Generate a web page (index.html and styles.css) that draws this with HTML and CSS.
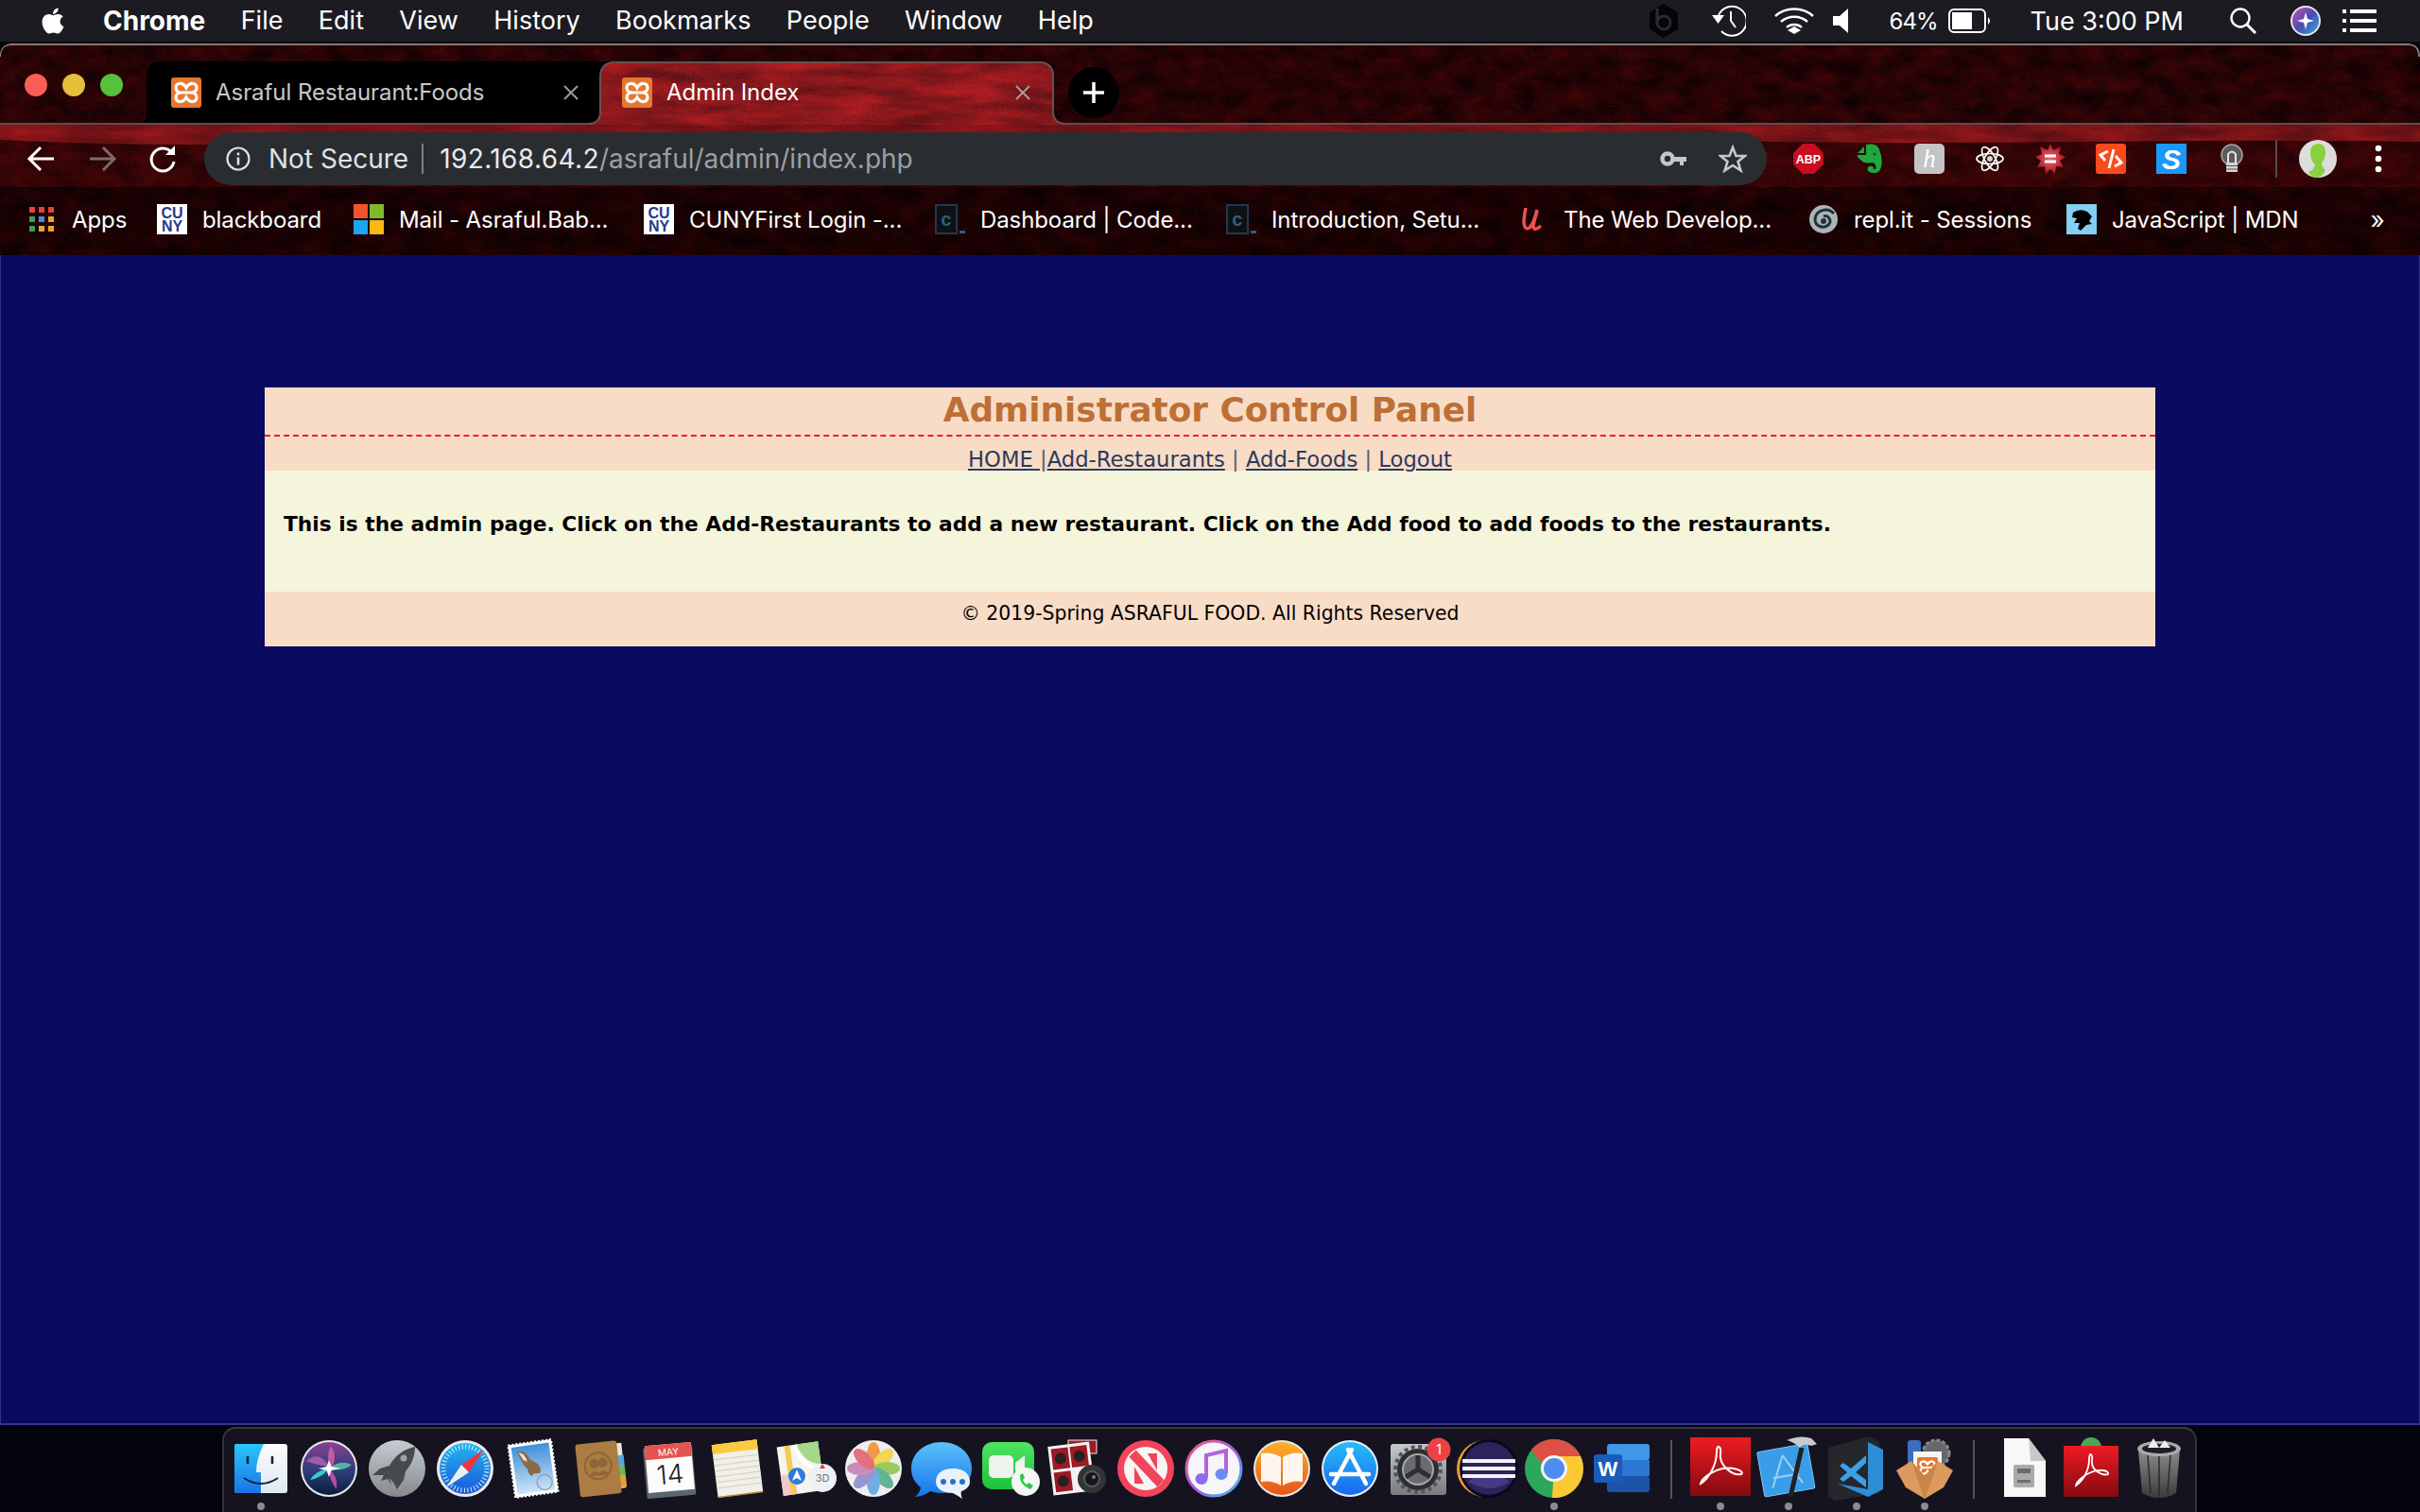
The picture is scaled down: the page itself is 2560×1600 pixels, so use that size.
FILE: index.html
```html
<!DOCTYPE html>
<html>
<head>
<meta charset="utf-8">
<title>Admin Index</title>
<link rel="stylesheet" href="styles.css">
</head>
<body>

<!-- shared gradients and small icons -->
<svg class="defs" width="0" height="0">
	<defs>
		<linearGradient id="g-finder" x1="0" y1="0" x2="0" y2="1"><stop offset="0" stop-color="#27c8fb"/><stop offset="1" stop-color="#1a74e8"/></linearGradient>
		<linearGradient id="g-finder2" x1="0" y1="0" x2="0" y2="1"><stop offset="0" stop-color="#fbfcfd"/><stop offset="1" stop-color="#dfe8f2"/></linearGradient>
		<linearGradient id="g-siri-top" x1="0" y1="0" x2="0" y2="1"><stop offset="0" stop-color="#8a3f93"/><stop offset=".55" stop-color="#2b3f78"/><stop offset="1" stop-color="#0c1c3a"/></linearGradient>
		<linearGradient id="g-rocket" x1="0" y1="0" x2="0" y2="1"><stop offset="0" stop-color="#c4cdd2"/><stop offset="1" stop-color="#85898c"/></linearGradient>
		<linearGradient id="g-safari" x1="0" y1="0" x2="0" y2="1"><stop offset="0" stop-color="#1fb6f0"/><stop offset="1" stop-color="#1a58d8"/></linearGradient>
		<linearGradient id="g-sky" x1="0" y1="0" x2="0" y2="1"><stop offset="0" stop-color="#3f8fdc"/><stop offset="1" stop-color="#cfe4f6"/></linearGradient>
		<linearGradient id="g-msg" x1="0" y1="0" x2="0" y2="1"><stop offset="0" stop-color="#5ac1fb"/><stop offset="1" stop-color="#1674ea"/></linearGradient>
		<linearGradient id="g-face" x1="0" y1="0" x2="0" y2="1"><stop offset="0" stop-color="#4fe35f"/><stop offset="1" stop-color="#1fc13c"/></linearGradient>
		<linearGradient id="g-books" x1="0" y1="0" x2="0" y2="1"><stop offset="0" stop-color="#fdb02c"/><stop offset="1" stop-color="#e4561a"/></linearGradient>
		<linearGradient id="g-store" x1="0" y1="0" x2="0" y2="1"><stop offset="0" stop-color="#25bdf8"/><stop offset="1" stop-color="#1a68ee"/></linearGradient>
		<linearGradient id="g-prefs" x1="0" y1="0" x2="0" y2="1"><stop offset="0" stop-color="#c5c9cc"/><stop offset="1" stop-color="#777b7e"/></linearGradient>
		<linearGradient id="g-red" x1="0" y1="0" x2="0" y2="1"><stop offset="0" stop-color="#ee1b24"/><stop offset="1" stop-color="#830a0f"/></linearGradient>
		<linearGradient id="g-ring" x1="0" y1="0" x2="1" y2="1"><stop offset="0" stop-color="#f45a7a"/><stop offset=".55" stop-color="#9b5de8"/><stop offset="1" stop-color="#35c6f0"/></linearGradient>
		<linearGradient id="g-trash" x1="0" y1="0" x2="0" y2="1"><stop offset="0" stop-color="#8a8c8e"/><stop offset="1" stop-color="#3a3b3d"/></linearGradient>
		<radialGradient id="g-wolf"><stop offset="0" stop-color="#f0686e"/><stop offset="1" stop-color="#a5161f"/></radialGradient>
		<linearGradient id="g-menu-siri" x1="0" y1="0" x2="1" y2="1"><stop offset="0" stop-color="#d653a8"/><stop offset=".5" stop-color="#4a4ab8"/><stop offset="1" stop-color="#2fb8d8"/></linearGradient>

		<filter id="tex-dark" x="0" y="0" width="100%" height="100%" color-interpolation-filters="sRGB">
			<feTurbulence type="fractalNoise" baseFrequency="0.035 0.06" numOctaves="3" seed="7" result="low"/>
			<feColorMatrix in="low" values="1 0 0 0 0  1 0 0 0 0  1 0 0 0 0  0 0 0 0 1" result="lowa"/>
			<feTurbulence type="fractalNoise" baseFrequency="0.7" numOctaves="2" seed="2" result="high"/>
			<feColorMatrix in="high" values="1 0 0 0 0  1 0 0 0 0  1 0 0 0 0  0 0 0 0 1" result="higha"/>
			<feComposite in="lowa" in2="higha" operator="arithmetic" k2=".5" k3=".5"/>
			<feColorMatrix values=".5 0 0 0 -.1  .04 0 0 0 -.008  .05 0 0 0 -.006  0 0 0 0 1"/>
		</filter>
		<filter id="tex-red" x="0" y="0" width="100%" height="100%" color-interpolation-filters="sRGB">
			<feTurbulence type="fractalNoise" baseFrequency="0.015 0.07" numOctaves="3" seed="3" result="low"/>
			<feColorMatrix in="low" values="1 0 0 0 0  1 0 0 0 0  1 0 0 0 0  0 0 0 0 1" result="lowa"/>
			<feTurbulence type="fractalNoise" baseFrequency="0.7" numOctaves="2" seed="9" result="high"/>
			<feColorMatrix in="high" values="1 0 0 0 0  1 0 0 0 0  1 0 0 0 0  0 0 0 0 1" result="higha"/>
			<feComposite in="lowa" in2="higha" operator="arithmetic" k2=".6" k3=".4"/>
			<feColorMatrix values=".8 0 0 0 .14  .1 0 0 0 .045  .1 0 0 0 .06  0 0 0 0 1"/>
		</filter>
		<clipPath id="band"><path d="M0 86H2560V104C2300 100 2100 108 1880 104C1600 98 1000 110 600 108C400 104 200 112 0 102Z"/></clipPath>
		<clipPath id="tab"><path d="M622 86q13 0 13-14V35q0-16 16-16H1099q16 0 16 16V72q0 14 13 14Z"/></clipPath>

		<symbol id="i-xampp" viewBox="0 0 32 32">
			<rect width="32" height="32" rx="3" fill="#e8772e"/>
			<path d="M16 11C12 4 5 6 5 11C5 14 8 16 11 16C8 16 5 18 5 21C5 26 12 28 16 21C20 28 27 26 27 21C27 18 24 16 21 16C24 16 27 14 27 11C27 6 20 4 16 11ZM11 16H21" fill="none" stroke="#fff" stroke-width="3.200"/>
		</symbol>
		<symbol id="i-cuny" viewBox="0 0 32 32">
			<rect width="32" height="32" fill="#fff"/>
			<text x="16" y="14.500" class="fav-text">CU</text>
			<text x="16" y="28.500" class="fav-text">NY</text>
		</symbol>
		<symbol id="i-code" viewBox="0 0 32 32">
			<rect x="1" y="1" width="22" height="30" fill="#0d1014" stroke="#1f3a4d" stroke-width="2"/>
			<text x="12" y="23" class="fav-c">c</text>
			<rect x="26" y="28" width="6" height="3" fill="#2f5f7d"/>
		</symbol>
	</defs>
</svg>

<!-- mac menu bar -->
<div class="menubar">
	<svg class="apple" viewBox="0 0 24 24"><path fill="#fff" d="M17.05 20.28c-.98.95-2.05.8-3.08.35-1.09-.46-2.09-.48-3.24 0-1.44.62-2.2.44-3.06-.35C2.79 15.25 3.51 7.59 9.05 7.31c1.35.07 2.29.74 3.08.8 1.18-.24 2.31-.93 3.57-.84 1.51.12 2.65.72 3.4 1.8-3.12 1.87-2.38 5.98.48 7.13-.57 1.5-1.31 2.99-2.54 4.09zM12.03 7.25c-.15-2.23 1.66-4.07 3.74-4.25.29 2.58-2.34 4.5-3.74 4.25z"/></svg>
	<ul class="menu">
		<li class="app-name">Chrome</li>
		<li>File</li>
		<li>Edit</li>
		<li>View</li>
		<li>History</li>
		<li>Bookmarks</li>
		<li>People</li>
		<li>Window</li>
		<li>Help</li>
	</ul>
	<div class="status">
		<svg class="st-hex" width="34" height="38" viewBox="0 0 34 38"><path d="M17 1L32 10V28L17 37L2 28V10Z" fill="#050507"/><circle cx="17" cy="21" r="7" fill="none" stroke="#2a2a30" stroke-width="3"/><path d="M10 6V21" stroke="#2a2a30" stroke-width="3"/></svg>
		<svg class="st-clock" width="38" height="36" viewBox="0 0 38 36"><path d="M9 12A15.500 15.500 0 1 1 12 29" fill="none" stroke="#fff" stroke-width="2"/><path d="M2 12H15L8.500 21Z" fill="#fff"/><path d="M22 8V18L27 25" fill="none" stroke="#fff" stroke-width="2"/></svg>
		<svg class="st-wifi" width="42" height="30" viewBox="0 0 42 30"><g fill="none" stroke="#fff" stroke-width="2.400"><path d="M1 10C12 0 30 0 41 10"/><path d="M7 16C15 9 27 9 35 16"/><path d="M13 22C17 18 25 18 29 22"/></g><path d="M14 26L21 22L28 26L21 30Z" fill="#fff" transform="translate(0 -1)"/></svg>
		<svg class="st-vol" width="18" height="26" viewBox="0 0 18 26"><path d="M0 8H7L16 0V26L7 18H0Z" fill="#fff"/></svg>
		<span class="st-pct">64%</span>
		<svg class="st-bat" width="46" height="26" viewBox="0 0 46 26"><rect x="1" y="1" width="38" height="24" rx="5" fill="none" stroke="#fff" stroke-width="2"/><rect x="4" y="4" width="21" height="18" fill="#fff"/><path d="M42 9Q46 13 42 17Z" fill="#fff"/></svg>
		<span class="st-time">Tue 3:00 PM</span>
		<svg class="st-search" width="30" height="30" viewBox="0 0 30 30"><circle cx="12" cy="12" r="9.500" fill="none" stroke="#fff" stroke-width="2.400"/><path d="M19 19L28 28" stroke="#fff" stroke-width="3"/></svg>
		<svg class="st-siri" width="32" height="32" viewBox="0 0 32 32"><circle cx="16" cy="16" r="15" fill="url(#g-menu-siri)" stroke="#e4e4e8" stroke-width="2"/><path d="M16 7L18 14L25 16L18 18L16 25L14 18L7 16L14 14Z" fill="#fff"/></svg>
		<svg class="st-list" width="36" height="24" viewBox="0 0 36 24"><g fill="#fff"><rect width="4" height="4"/><rect y="10" width="4" height="4"/><rect y="20" width="4" height="4"/><rect x="8" width="28" height="4"/><rect x="8" y="10" width="28" height="4"/><rect x="8" y="20" width="28" height="4"/></g></svg>
	</div>
</div>

<div class="window">
	<div class="chrome">
		<!-- themed frame, lies behind the tabs and toolbar -->
		<svg class="frame" width="2560" height="224" viewBox="0 0 2560 224">
			<rect width="2560" height="224" filter="url(#tex-dark)"/>
			<rect y="86" width="2560" height="66" fill="#b01018" opacity=".1"/>
			<rect y="152" width="2560" height="72" fill="#000" opacity=".3"/>
			<g clip-path="url(#band)" opacity=".78"><rect y="86" width="2560" height="40" filter="url(#tex-red)"/></g>
			<rect y="84" width="2560" height="2" fill="#5e4d4f"/>
			<path d="M148 84q7 0 7-10V35q0-16 16-16H650V84Z" fill="#000"/>
			<g clip-path="url(#tab)"><rect x="620" y="18" width="510" height="70" filter="url(#tex-red)"/></g>
			<path d="M622 85q13 0 13-13V35q0-15 16-15H1099q15 0 15 15V72q0 13 14 13" fill="none" stroke="#645153" stroke-width="2"/>
			<path d="M0 14Q0 1 12 1H2548Q2559 1 2559 14" fill="none" stroke="#85797a" stroke-width="2"/>
		</svg>

		<div class="tabstrip">
			<div class="lights">
				<span class="light light-red"></span>
				<span class="light light-yellow"></span>
				<span class="light light-green"></span>
			</div>
			<div class="tab">
				<svg class="favicon"><use href="#i-xampp"/></svg>
				<span class="tab-title">Asraful Restaurant:Foods</span>
				<svg class="tab-close" width="16" height="16" viewBox="0 0 16 16"><path d="M1 1L15 15M15 1L1 15" stroke="#9a9a9a" stroke-width="2"/></svg>
			</div>
			<div class="tab active">
				<svg class="favicon"><use href="#i-xampp"/></svg>
				<span class="tab-title">Admin Index</span>
				<svg class="tab-close" width="16" height="16" viewBox="0 0 16 16"><path d="M1 1L15 15M15 1L1 15" stroke="#b39a9a" stroke-width="2"/></svg>
			</div>
			<div class="new-tab">
				<svg width="26" height="26" viewBox="0 0 26 26"><path d="M13 2V24M2 13H24" stroke="#fff" stroke-width="3.500"/></svg>
			</div>
		</div>

		<div class="toolbar">
			<svg class="nav-btn" viewBox="0 0 32 32"><path d="M29 16H4M15 4L3 16L15 28" fill="none" stroke="#fff" stroke-width="3"/></svg>
			<svg class="nav-btn" viewBox="0 0 32 32"><path d="M3 16H28M17 4L29 16L17 28" fill="none" stroke="#7d6a6b" stroke-width="3"/></svg>
			<svg class="nav-btn" viewBox="0 0 32 32"><path d="M26 10A12 12 0 1 0 28 19" fill="none" stroke="#fff" stroke-width="3"/><path d="M19 12L29 2V12Z" fill="#fff"/></svg>
			<div class="omnibox">
				<svg class="info" width="26" height="26" viewBox="0 0 26 26"><circle cx="13" cy="13" r="11.500" fill="none" stroke="#dfe1e5" stroke-width="2.200"/><rect x="11.700" y="11.500" width="2.600" height="8" fill="#dfe1e5"/><rect x="11.700" y="6.500" width="2.600" height="2.800" fill="#dfe1e5"/></svg>
				<span class="not-secure">Not Secure</span>
				<span class="omni-sep"></span>
				<span class="url"><b>192.168.64.2</b>/asraful/admin/index.php</span>
				<svg class="key" width="28" height="16" viewBox="0 0 28 16"><circle cx="8" cy="8" r="5.500" fill="none" stroke="#c5c8cb" stroke-width="4.500"/><path d="M13 6H28V11H25V15H21V11H13Z" fill="#c5c8cb"/></svg>
				<svg class="star" width="30" height="30" viewBox="0 0 30 30"><path d="M15 3L18.500 12H28L20.500 18L23.500 27.500L15 22L6.500 27.500L9.500 18L2 12H11.500Z" fill="none" stroke="#c5c8cb" stroke-width="2.600"/></svg>
			</div>
			<div class="exts">
				<svg class="ext" viewBox="0 0 32 32"><path d="M10 0H22L32 10V22L22 32H10L0 22V10Z" fill="#c70d1f"/><text x="16" y="21" class="abp">ABP</text></svg>
				<svg class="ext" viewBox="0 0 32 32"><path d="M4 10L11 3V10ZM13 1Q24-1 27 6Q31 16 29 25Q27 32 20 31Q13 30 15 25Q18 22 21 25Q20 28 23 27Q25 23 20 20Q11 22 7 17Q3 14 4 12H13Z" fill="#1fa83d"/><circle cx="22" cy="11" r="1.500" fill="#0a5a20"/></svg>
				<svg class="ext" viewBox="0 0 32 32"><rect width="32" height="32" rx="5" fill="#c4c4c4"/><text x="16" y="25" class="ext-h">h</text></svg>
				<svg class="ext" viewBox="0 0 32 32"><g fill="none" stroke="#fff" stroke-width="1.700"><ellipse cx="16" cy="16" rx="14" ry="5.500"/><ellipse cx="16" cy="16" rx="14" ry="5.500" transform="rotate(60 16 16)"/><ellipse cx="16" cy="16" rx="14" ry="5.500" transform="rotate(120 16 16)"/></g><circle cx="16" cy="16" r="3" fill="#d8cfcf"/></svg>
				<svg class="ext" viewBox="0 0 32 32"><path d="M16 0L19 7L27 3L25 11L32 14L26 18L30 25L22 24L21 32L16 27L11 32L10 24L2 25L6 18L0 14L7 11L5 3L13 7Z" fill="url(#g-wolf)"/><path d="M10 13H22M10 19H22" stroke="#fff" stroke-width="3"/></svg>
				<svg class="ext" viewBox="0 0 32 32"><rect width="32" height="32" rx="3" fill="#fb4a1c"/><path d="M13 8L5 12L10 18M19 6L14 26M21 13L27 20L20 24" fill="none" stroke="#fff" stroke-width="3"/></svg>
				<svg class="ext" viewBox="0 0 32 32"><rect width="32" height="32" fill="#1b97fb"/><text x="16" y="27" class="ext-s">S</text></svg>
				<svg class="ext" viewBox="0 0 32 32"><circle cx="16" cy="12" r="11" fill="#5b5b5d" stroke="#a4a4a4" stroke-width="1.500"/><path d="M12 20V11Q16 6 20 11V20" fill="none" stroke="#e4e4e4" stroke-width="2"/><rect x="10" y="20" width="12" height="10" rx="1" fill="#d5d5d5"/><path d="M10 23.500H22M10 27H22" stroke="#555" stroke-width="1"/></svg>
			</div>
			<span class="tool-sep"></span>
			<svg class="avatar" viewBox="0 0 40 40"><circle cx="20" cy="20" r="20" fill="#dcdcdc"/><path d="M12 14Q12 4 21 4Q29 5 28 15Q27 22 24 24Q24 29 28 32Q24 40 18 40Q12 38 10 34Q17 31 17 26Q12 22 12 14Z" fill="#8ad03d"/></svg>
			<svg class="dots" viewBox="0 0 32 32"><circle cx="16" cy="5" r="3.300" fill="#fff"/><circle cx="16" cy="16" r="3.300" fill="#fff"/><circle cx="16" cy="27" r="3.300" fill="#fff"/></svg>
		</div>

		<div class="bookmarks">
			<div class="bm bm-apps">
				<svg class="bm-grid" viewBox="0 0 26 26"><rect width="6" height="6" fill="#e8403a"/><rect x="10" width="6" height="6" fill="#e8403a"/><rect x="20" width="6" height="6" fill="#e8403a"/><rect y="10" width="6" height="6" fill="#3b9e5c"/><rect x="10" y="10" width="6" height="6" fill="#3e8ee8"/><rect x="20" y="10" width="6" height="6" fill="#f0a32c"/><rect y="20" width="6" height="6" fill="#3b9e5c"/><rect x="10" y="20" width="6" height="6" fill="#f0a32c"/><rect x="20" y="20" width="6" height="6" fill="#f0a32c"/></svg>
				<span>Apps</span>
			</div>
			<div class="bm bm-black"><svg class="favicon"><use href="#i-cuny"/></svg><span>blackboard</span></div>
			<div class="bm bm-mail">
				<svg class="favicon" viewBox="0 0 32 32"><rect width="15" height="15" fill="#f1542c"/><rect x="17" width="15" height="15" fill="#7fba2a"/><rect y="17" width="15" height="15" fill="#1ca5f0"/><rect x="17" y="17" width="15" height="15" fill="#fdb813"/></svg>
				<span>Mail - Asraful.Bab...</span>
			</div>
			<div class="bm bm-first"><svg class="favicon"><use href="#i-cuny"/></svg><span>CUNYFirst Login -...</span></div>
			<div class="bm bm-dash"><svg class="favicon"><use href="#i-code"/></svg><span>Dashboard | Code...</span></div>
			<div class="bm bm-intro"><svg class="favicon"><use href="#i-code"/></svg><span>Introduction, Setu...</span></div>
			<div class="bm bm-udemy">
				<svg class="favicon" viewBox="0 0 32 32"><path d="M8 4Q6 14 6 20Q7 28 12 25Q16 22 20 6M20 8Q16 20 16 24Q17 29 24 23" fill="none" stroke="#ec5252" stroke-width="3.500"/></svg>
				<span>The Web Develop...</span>
			</div>
			<div class="bm bm-repl">
				<svg class="favicon" viewBox="0 0 32 32"><circle cx="16" cy="16" r="15" fill="#aab4ba"/><path d="M27 10C20 3 8 6 7 16C7 24 17 27 22 21C25 16 20 11 16 13" fill="none" stroke="#24323a" stroke-width="3"/><circle cx="16" cy="18" r="3" fill="#24323a"/></svg>
				<span>repl.it - Sessions</span>
			</div>
			<div class="bm bm-mdn">
				<svg class="favicon" viewBox="0 0 32 32"><rect width="32" height="32" fill="#83d0f2"/><path d="M7 9Q14 4 22 8L27 13L24 18L27 21L21 22L15 28L12 26L14 20L8 20L11 15L6 14Z" fill="#000"/></svg>
				<span>JavaScript | MDN</span>
			</div>
			<span class="bm-more">»</span>
		</div>
	</div>

	<!-- the page inside the browser -->
	<div class="page">
		<div class="panel">
			<h1 class="panel-title">Administrator Control Panel</h1>
			<div class="panel-nav"><a href="#">HOME </a>|<a href="#">Add-Restaurants</a> | <a href="#">Add-Foods</a> | <a href="#">Logout</a></div>
			<div class="panel-body">
				<p>This is the admin page. Click on the Add-Restaurants to add a new restaurant. Click on the Add food to add foods to the restaurants.</p>
			</div>
			<div class="panel-foot">© 2019-Spring ASRAFUL FOOD. All Rights Reserved</div>
		</div>
	</div>
</div>

<div class="dock">
	<!-- finder -->
	<div class="dock-item on"><svg viewBox="0 0 72 72"><rect x="8" y="10" width="56" height="52" rx="3" fill="url(#g-finder2)"/><path d="M11 10H39Q31 26 31 40H36V62H11Q8 62 8 59V13Q8 10 11 10Z" fill="url(#g-finder)"/><path d="M22 23V31M48 23V31" stroke="#123" stroke-width="2.500"/><path d="M18 46Q36 58 54 46" fill="none" stroke="#123" stroke-width="2"/></svg><i></i></div>
	<!-- siri -->
	<div class="dock-item"><svg viewBox="0 0 72 72"><circle cx="36" cy="36" r="30" fill="#e8e8ea"/><circle cx="36" cy="36" r="28" fill="url(#g-siri-top)"/><path d="M12 28Q26 16 36 34Q22 32 12 28Z" fill="#b565b8" opacity=".8"/><path d="M38 12Q46 24 38 36Q32 24 38 12Z" fill="#e060b0" opacity=".8"/><path d="M36 36Q48 26 60 32Q50 40 36 36Z" fill="#58c8a8" opacity=".85"/><path d="M36 36Q46 44 44 58Q36 48 36 36Z" fill="#d050b0" opacity=".85"/><path d="M36 36Q28 46 16 48Q22 38 36 36Z" fill="#40d8d8" opacity=".9"/><path d="M36 27L38.500 34L48 36L38.500 38L36 45L33.500 38L25 36L33.500 34Z" fill="#fff"/></svg><i></i></div>
	<!-- launchpad -->
	<div class="dock-item"><svg viewBox="0 0 72 72"><circle cx="36" cy="36" r="30" fill="url(#g-rocket)"/><path d="M55 13C44 15 34 22 28 33L18 36L10 43L22 43L19 49L26 47L30 53L28 46L33 52L36 58L43 48L45 39C51 32 55 24 55 13Z" fill="#47494c"/><circle cx="43" cy="25" r="3.500" fill="#9ca1a4"/></svg><i></i></div>
	<!-- safari -->
	<div class="dock-item"><svg viewBox="0 0 72 72"><circle cx="36" cy="36" r="30" fill="#e9ecef"/><circle cx="36" cy="36" r="27" fill="url(#g-safari)"/><circle cx="36" cy="36" r="23" fill="none" stroke="#d9effb" stroke-width="5" stroke-dasharray="1 2.600"/><path d="M56 16L32 32L40 40Z" fill="#f0343c"/><path d="M16 56L40 40L32 32Z" fill="#eceff2"/></svg><i></i></div>
	<!-- mail -->
	<div class="dock-item"><svg viewBox="0 0 72 72"><g transform="rotate(-8 36 36)"><rect x="13" y="8" width="46" height="56" fill="#fff" stroke="#fff" stroke-width="2" stroke-dasharray="2 2"/><rect x="16" y="11" width="40" height="50" fill="url(#g-sky)"/><path d="M22 16Q30 14 34 26Q48 34 42 42Q34 40 34 44Q30 42 30 36Q24 28 22 16Z" fill="#8a6a48"/><path d="M23 17Q29 18 31 28L27 26Z" fill="#e8e2d6"/><circle cx="46" cy="52" r="8" fill="none" stroke="#8a9aa8" stroke-width="1.200"/></g></svg><i></i></div>
	<!-- contacts -->
	<div class="dock-item"><svg viewBox="0 0 72 72"><g transform="rotate(-6 36 36)"><rect x="52" y="11" width="8" height="48" fill="#e8e6e0"/><rect x="54" y="24" width="7" height="12" fill="#5ba8d8"/><rect x="54" y="36" width="7" height="10" fill="#6fb84e"/><rect x="54" y="46" width="7" height="12" fill="#e8a030"/><rect x="11" y="8" width="44" height="56" rx="3" fill="#ab7d44"/><circle cx="33" cy="33" r="14" fill="none" stroke="#8f6635" stroke-width="2"/><circle cx="29" cy="30" r="5" fill="#8f6635"/><circle cx="38" cy="30" r="5" fill="#8f6635"/><path d="M22 43Q29 34 35 43ZM31 43Q38 34 44 43Z" fill="#8f6635"/></g></svg><i></i></div>
	<!-- calendar -->
	<div class="dock-item"><svg viewBox="0 0 72 72"><g transform="rotate(-5 36 36)"><rect x="10" y="12" width="52" height="54" rx="2" fill="#5b6770"/><rect x="12" y="10" width="49" height="50" fill="#fcfcfc"/><rect x="12" y="10" width="49" height="15" fill="#e5524f"/><text x="36.500" y="22" class="cal-may">MAY</text><text x="36.500" y="52" class="cal-day">14</text></g></svg><i></i></div>
	<!-- notes -->
	<div class="dock-item"><svg viewBox="0 0 72 72"><g transform="rotate(-7 36 36)"><rect x="12" y="8" width="48" height="56" fill="#f1efe8"/><rect x="12" y="8" width="48" height="10" fill="#fbcb3f"/><path d="M12 24H60M12 30H60M12 36H60M12 42H60M12 48H60M12 54H60" stroke="#cfcdc6" stroke-width="1"/><rect x="12" y="63" width="48" height="1.500" fill="#a88a40"/></g></svg><i></i></div>
	<!-- maps -->
	<div class="dock-item"><svg viewBox="0 0 72 72"><g transform="rotate(-8 32 36)"><rect x="9" y="10" width="44" height="52" fill="#f6f4ec"/><path d="M30 10H53V34Q36 32 30 10Z" fill="#a6d88a"/><path d="M9 40H24V62H9Z" fill="#f2c8d0"/><path d="M20 10V62" stroke="#f4cc52" stroke-width="6"/><path d="M28 10Q32 36 53 40" fill="none" stroke="#fff" stroke-width="4"/></g><circle cx="27" cy="44" r="9" fill="#2c7be0"/><path d="M27 37L32 49L27 46L22 49Z" fill="#fff"/><circle cx="54" cy="46" r="15" fill="#eef1f4"/><path d="M54 31L51 36H57Z" fill="#e0403a"/><text x="54" y="50" class="maps-3d">3D</text></svg><i></i></div>
	<!-- photos -->
	<div class="dock-item"><svg viewBox="0 0 72 72"><circle cx="36" cy="36" r="30" fill="#eeeeee"/><g transform="translate(36 36)" opacity=".85"><ellipse cx="0" cy="-14" rx="7" ry="14" fill="#f58a2e"/><ellipse cx="0" cy="-14" rx="7" ry="14" fill="#f3d23a" transform="rotate(45)"/><ellipse cx="0" cy="-14" rx="7" ry="14" fill="#8ec448" transform="rotate(90)"/><ellipse cx="0" cy="-14" rx="7" ry="14" fill="#4aa98a" transform="rotate(135)"/><ellipse cx="0" cy="-14" rx="7" ry="14" fill="#5aa4de" transform="rotate(180)"/><ellipse cx="0" cy="-14" rx="7" ry="14" fill="#8b86c8" transform="rotate(225)"/><ellipse cx="0" cy="-14" rx="7" ry="14" fill="#c57cb4" transform="rotate(270)"/><ellipse cx="0" cy="-14" rx="7" ry="14" fill="#e5596a" transform="rotate(315)"/></g></svg><i></i></div>
	<!-- messages -->
	<div class="dock-item"><svg viewBox="0 0 72 72"><path d="M36 8C18 8 4 20 4 36C4 46 9 52 14 56Q13 62 8 66Q18 65 24 60Q30 62 36 62C54 62 68 52 68 36C68 20 54 8 36 8Z" fill="url(#g-msg)"/><path d="M48 36C36 36 30 42 30 50C30 58 38 62 48 62Q52 64 58 68Q56 64 57 60C63 58 66 54 66 50C66 42 60 36 48 36Z" fill="#e9f2fb"/><circle cx="38" cy="50" r="3" fill="#2a6fc4"/><circle cx="48" cy="50" r="3" fill="#2a6fc4"/><circle cx="58" cy="50" r="3" fill="#2a6fc4"/></svg><i></i></div>
	<!-- facetime -->
	<div class="dock-item"><svg viewBox="0 0 72 72"><rect x="7" y="8" width="55" height="50" rx="10" fill="url(#g-face)"/><rect x="14" y="22" width="26" height="24" rx="5" fill="#eef4ec"/><path d="M42 30L52 22V46L42 38Z" fill="#eef4ec"/><circle cx="53" cy="50" r="15" fill="#f4f7f4"/><path d="M47 43Q46 53 58 58L61 54L56 51L54 53Q51 51 50 48L52 46L50 41Z" fill="#2cc84a"/></svg><i></i></div>
	<!-- photo booth -->
	<div class="dock-item"><svg viewBox="0 0 72 72"><rect x="26" y="6" width="30" height="14" fill="#9c1a24" stroke="#eee"/><g transform="rotate(-7 30 34)"><rect x="7" y="10" width="44" height="52" fill="#f2f2f2"/><rect x="10" y="13" width="18" height="22" fill="#9c1a24"/><rect x="30" y="13" width="18" height="22" fill="#9c1a24"/><rect x="10" y="38" width="18" height="21" fill="#9c1a24"/><circle cx="19" cy="24" r="6" fill="#2b2020"/><circle cx="39" cy="24" r="6" fill="#2b2020"/><circle cx="19" cy="48" r="6" fill="#2b2020"/></g><circle cx="51" cy="47" r="15" fill="#333436"/><circle cx="51" cy="47" r="8" fill="#14141a" stroke="#585a5e" stroke-width="2"/><circle cx="53" cy="45" r="2" fill="#6a72a8"/></svg><i></i></div>
	<!-- news -->
	<div class="dock-item"><svg viewBox="0 0 72 72"><circle cx="36" cy="36" r="30" fill="#f2445a"/><circle cx="36" cy="36" r="23" fill="#f7f5f5"/><path d="M22 20L52 52" stroke="#f2445a" stroke-width="10"/><path d="M24 34V52L34 52ZM48 38V20L38 20Z" fill="#f2445a"/></svg><i></i></div>
	<!-- music -->
	<div class="dock-item"><svg viewBox="0 0 72 72"><circle cx="36" cy="36" r="29" fill="#f7f5f8" stroke="url(#g-ring)" stroke-width="3"/><path d="M28 46V22L49 17V41" fill="none" stroke="#b064e0" stroke-width="4"/><ellipse cx="23" cy="47" rx="6.500" ry="6" fill="#8a6cf0"/><ellipse cx="44" cy="42" rx="6.500" ry="6" fill="#6a8cf0"/></svg><i></i></div>
	<!-- books -->
	<div class="dock-item"><svg viewBox="0 0 72 72"><circle cx="36" cy="36" r="30" fill="#e8e8e8"/><circle cx="36" cy="36" r="28" fill="url(#g-books)"/><path d="M35 24Q26 18 14 20V50Q26 48 35 54ZM37 24Q46 18 58 20V50Q46 48 37 54Z" fill="#fdf6ee"/></svg><i></i></div>
	<!-- app store -->
	<div class="dock-item"><svg viewBox="0 0 72 72"><circle cx="36" cy="36" r="30" fill="#e8eef4"/><circle cx="36" cy="36" r="28" fill="url(#g-store)"/><path d="M38 16L19 52M34 16L53 52M16 42H56" fill="none" stroke="#fff" stroke-width="4.500" stroke-linecap="round"/></svg><i></i></div>
	<!-- system preferences -->
	<div class="dock-item"><svg viewBox="0 0 72 72"><rect x="7" y="10" width="59" height="54" rx="3" fill="url(#g-prefs)"/><circle cx="36" cy="37" r="22" fill="#2e2f31"/><circle cx="36" cy="37" r="24" fill="none" stroke="#55565a" stroke-width="4" stroke-dasharray="4 3.500"/><circle cx="36" cy="37" r="16" fill="#6a6b6e" stroke="#a5a7aa" stroke-width="2"/><path d="M36 37V22M36 37L49 45M36 37L23 45" stroke="#2e2f31" stroke-width="5"/><circle cx="58" cy="16" r="12.500" fill="#ee4146"/><text x="58" y="21" class="badge-num">1</text></svg><i></i></div>
	<!-- eclipse -->
	<div class="dock-item"><svg viewBox="0 0 72 72"><circle cx="35" cy="36" r="30" fill="#f19a2e"/><circle cx="39" cy="36" r="31" fill="#0a0820"/><circle cx="39" cy="36" r="28" fill="#2c2458"/><path d="M17 50Q39 64 61 50Q50 42 39 42Q28 42 17 50Z" fill="#443a86"/><path d="M11 28H67M11 36H67M11 44H67" stroke="#f2f0f8" stroke-width="4"/></svg><i></i></div>
	<!-- chrome -->
	<div class="dock-item on"><svg viewBox="0 0 72 72"><circle cx="36" cy="36" r="31" fill="#2fa75a"/><path d="M36 5A31 31 0 0 1 64 23H36Q27 23 23 31L12 16A31 31 0 0 1 36 5Z" fill="#dd5144"/><path d="M64 23H40L36 36L34 67A31 31 0 0 0 64 23Z" fill="#fcc934"/><circle cx="36" cy="36" r="14" fill="#f5f5f5"/><circle cx="36" cy="36" r="11" fill="#4f8cf0"/></svg><i></i></div>
	<!-- word -->
	<div class="dock-item"><svg viewBox="0 0 72 72"><rect x="20" y="10" width="45" height="17" rx="3" fill="#3f97e8"/><rect x="20" y="27" width="45" height="17" fill="#2a76d0"/><rect x="20" y="44" width="45" height="17" rx="3" fill="#1b54a8"/><rect x="6" y="21" width="30" height="30" rx="3" fill="#1a5cb8"/><text x="21" y="44" class="word-w">W</text></svg><i></i></div>
	<span class="dock-sep"></span>
	<!-- acrobat -->
	<div class="dock-item on"><svg viewBox="0 0 72 72"><rect x="4" y="3" width="64" height="62" fill="url(#g-red)"/><path d="M15 52C22 48 32 34 32 18C32 10 37 12 36 20C34 32 48 44 58 42C62 38 48 34 38 36C28 38 16 46 15 52Z" fill="none" stroke="#fff" stroke-width="2"/></svg><i></i></div>
	<!-- xcode -->
	<div class="dock-item on"><svg viewBox="0 0 72 72"><g transform="rotate(-10 32 36)"><rect x="6" y="14" width="54" height="48" rx="2" fill="#3a9de8" stroke="#7cc4f4"/><path d="M32 22L16 54M32 22L48 54M18 44H46" fill="none" stroke="#9bd0f4" stroke-width="2"/></g><path d="M50 14L38 66" stroke="#202124" stroke-width="5"/><path d="M34 6Q48 0 60 4L66 10L60 12Q52 8 48 14Q42 8 34 6Z" fill="#c8cbce"/></svg><i></i></div>
	<!-- vscode -->
	<div class="dock-item on"><svg viewBox="0 0 72 72"><path d="M6 14L50 2L60 8V62L14 70L6 66Z" fill="#26272b"/><path d="M48 8L64 16V58L48 66L16 52L48 58Z" fill="#2d8ed6"/><path d="M46 22L30 36L22 30L18 33L26 40L18 47L22 50L30 44L46 56V22ZM46 30V48L35 40Z" fill="#3aa0e8"/></svg><i></i></div>
	<!-- xampp -->
	<div class="dock-item on"><svg viewBox="0 0 72 72"><rect x="18" y="6" width="14" height="28" rx="3" fill="#3a6fc0"/><circle cx="48" cy="20" r="14" fill="#66686c" stroke="#88898c" stroke-width="3" stroke-dasharray="4 2"/><rect x="24" y="18" width="30" height="32" fill="#f5f5f5"/><use href="#i-xampp" x="28" y="24" width="22" height="22"/><path d="M6 38L22 28L36 44L50 28L66 38L56 56L36 68L16 56Z" fill="#dd9a5e"/><path d="M22 28L36 44L50 28L44 46L36 68L28 46Z" fill="#c98448"/></svg><i></i></div>
	<span class="dock-sep"></span>
	<!-- installer disk -->
	<div class="dock-item"><svg viewBox="0 0 72 72"><path d="M16 4H42L60 28V66H16Z" fill="#f8f8f8"/><path d="M42 4L60 28H44Z" fill="#c8c8c8"/><rect x="26" y="32" width="22" height="24" rx="2" fill="#a8aaac"/><rect x="30" y="36" width="14" height="5" fill="#6a6c6e"/><rect x="30" y="48" width="14" height="3" fill="#6a6c6e"/></svg><i></i></div>
	<!-- acrobat again -->
	<div class="dock-item"><svg viewBox="0 0 72 72"><circle cx="36" cy="14" r="11" fill="#48a858"/><rect x="7" y="12" width="58" height="54" fill="url(#g-red)"/><path d="M20 54C26 50 34 40 34 26C34 18 38 20 37 28C36 38 48 44 54 42C56 38 44 36 36 40C30 42 20 50 20 54Z" fill="none" stroke="#fff" stroke-width="1.800"/></svg><i></i></div>
	<!-- trash -->
	<div class="dock-item"><svg viewBox="0 0 72 72"><path d="M14 16L18 62Q36 72 54 62L58 16Z" fill="url(#g-trash)"/><path d="M24 22L27 62M36 22V66M48 22L45 62" stroke="#2a2b2d" stroke-width="1.500"/><ellipse cx="36" cy="15" rx="23" ry="8" fill="#a8a9ab"/><ellipse cx="36" cy="15" rx="18" ry="5" fill="#1e1f20"/><path d="M24 14L30 4L36 14L42 6L48 14" fill="#eceef0"/></svg><i></i></div>
</div>

</body>
</html>
```

FILE: styles.css
```css
* {
	margin: 0;
	padding: 0;
	box-sizing: border-box;
}
html, body {
	height: 1600px;
	overflow: hidden;
	background: #03030c;
}
body {
	display: flex;
	flex-direction: column;
	font-family: "Inter", "Liberation Sans", sans-serif;
}
.defs {
	position: absolute;
}

/* menu bar */
.menubar {
	display: flex;
	align-items: center;
	height: 46px;
	flex: none;
	padding-left: 38px;
	color: #fff;
	font-size: 27px;
	background: #1b1b21;
	border-bottom: 2px solid #0a0a10;
}
.apple {
	width: 36px;
	height: 36px;
	flex: none;
}
.menu {
	display: flex;
	gap: 37.4px;
	margin-left: 35px;
	list-style: none;
}
.app-name {
	font-size: 28px;
	font-weight: 700;
}
.status {
	display: flex;
	align-items: center;
	margin-left: auto;
}
.st-hex { margin-right: 32px; }
.st-clock { margin-right: 30px; }
.st-wifi { margin-right: 20px; }
.st-vol { margin-right: 42px; }
.st-pct { margin-right: 11px; font-size: 24px; letter-spacing: -1px; }
.st-bat { margin-right: 41px; }
.st-time { margin-right: 48px; }
.st-search { margin-right: 35px; }
.st-siri { margin-right: 23px; }
.st-list { margin-right: 46px; }

/* browser window */
.window {
	display: flex;
	flex-direction: column;
	height: 1462px;
	flex: none;
}
.chrome {
	position: relative;
	height: 224px;
	flex: none;
	border-radius: 12px 12px 0 0;
	overflow: hidden;
}
.frame {
	position: absolute;
	top: 0;
	left: 0;
}
.tabstrip, .toolbar, .bookmarks {
	position: relative;
	display: flex;
}

/* tabs */
.tabstrip {
	height: 86px;
	padding-left: 26px;
}
.lights {
	display: flex;
	gap: 16px;
	width: 129px;
	padding-top: 32px;
}
.light {
	width: 24px;
	height: 24px;
	border-radius: 50%;
}
.light-red { background: #fc5d57; }
.light-yellow { background: #e5bf3b; }
.light-green { background: #56c13a; }
.tab {
	display: flex;
	align-items: center;
	width: 480px;
	height: 65px;
	margin-top: 19px;
	padding: 0 23px 0 26px;
	font-size: 24px;
	letter-spacing: -.05px;
	color: #c9c9c9;
}
.tab.active {
	color: #fff;
	padding: 0 25px 0 23px;
}
.favicon {
	width: 32px;
	height: 32px;
	flex: none;
}
.tab-title {
	margin-left: 15px;
	white-space: nowrap;
}
.tab-close {
	margin-left: auto;
	flex: none;
}
.new-tab {
	display: flex;
	align-items: center;
	justify-content: center;
	width: 54px;
	height: 54px;
	margin: 25px 0 0 15px;
	background: #000;
	border-radius: 50%;
}

/* toolbar */
.toolbar {
	align-items: center;
	gap: 32px;
	height: 72px;
	padding-left: 28px;
}
.nav-btn {
	width: 32px;
	height: 32px;
	flex: none;
}
.omnibox {
	display: flex;
	align-items: center;
	width: 1653px;
	height: 56px;
	margin-left: -4px;
	margin-right: -4px;
	padding: 0 21px 0 23px;
	font-size: 28px;
	color: #dfe1e5;
	background: #2a2d30;
	border-radius: 28px;
}
.not-secure {
	margin-left: 19px;
	white-space: nowrap;
}
.omni-sep {
	width: 2px;
	height: 32px;
	margin: 0 17px 0 14px;
	background: #7e8185;
}
.url {
	color: #9aa0a6;
	white-space: nowrap;
}
.url b {
	font-weight: 400;
	letter-spacing: .4px;
	color: #e8eaed;
}
.key {
	margin-left: auto;
	margin-right: 34px;
}
.exts {
	display: flex;
	gap: 32px;
}
.ext {
	width: 32px;
	height: 32px;
	flex: none;
}
.abp {
	font: 700 12.5px "Liberation Sans", sans-serif;
	fill: #fff;
	text-anchor: middle;
}
.ext-h {
	font: italic 27px "Liberation Serif", serif;
	fill: #fff;
	text-anchor: middle;
}
.ext-s {
	font: italic 700 30px "Liberation Sans", sans-serif;
	fill: #fff;
	text-anchor: middle;
}
.tool-sep {
	width: 2px;
	height: 40px;
	margin-left: -2px;
	background: #5c4a4c;
	flex: none;
}
.avatar {
	width: 40px;
	height: 40px;
	margin-left: -9px;
	flex: none;
}
.dots {
	width: 32px;
	height: 32px;
	margin-left: -4px;
	flex: none;
}

/* bookmarks bar */
.bookmarks {
	align-items: center;
	height: 56px;
	padding-left: 31px;
	font-size: 24px;
	letter-spacing: -.1px;
	color: #fff;
}
.bm {
	display: flex;
	align-items: center;
	gap: 16px;
	flex: none;
	white-space: nowrap;
}
.bm-apps { width: 135px; gap: 19px; }
.bm-black { width: 208px; }
.bm-mail { width: 307px; }
.bm-first { width: 308px; }
.bm-dash { width: 308px; }
.bm-intro { width: 309px; }
.bm-udemy { width: 307px; }
.bm-repl { width: 273px; }
.bm-grid {
	width: 26px;
	height: 26px;
}
.bm-more {
	margin-left: 76px;
	font-size: 26px;
}
.fav-text {
	font: 700 16px "Liberation Sans", sans-serif;
	fill: #1f3b8c;
	text-anchor: middle;
}
.fav-c {
	font: 700 20px "Liberation Mono", monospace;
	fill: #2f5f7d;
	text-anchor: middle;
}

/* the admin page */
.page {
	flex: 1;
	padding-top: 140px;
	background: #0a0a60;
	border: 1px solid #33338a;
	border-width: 0 1px 2px;
}
.panel {
	width: 2000px;
	margin: 0 auto;
	font-family: "DejaVu Sans", "Liberation Sans", sans-serif;
}
.panel-title {
	height: 52px;
	font-size: 35.8px;
	line-height: 48px;
	font-weight: 700;
	text-align: center;
	color: #bd6f36;
	background: #f8dcc6;
	border-bottom: 2px dashed #f5132e;
}
.panel-nav {
	height: 36px;
	padding-top: 12px;
	font-size: 22.7px;
	line-height: 25px;
	text-align: center;
	color: #55617a;
	background: #f8dcc6;
}
.panel-nav a {
	color: #2c3a5c;
}
.panel-body {
	height: 128px;
	padding: 44px 20px 0;
	background: #f5f5dc;
}
.panel-body p {
	font-size: 21.76px;
	line-height: 26px;
	font-weight: 700;
	color: #000;
}
.panel-foot {
	height: 58px;
	padding-top: 10px;
	font-size: 20.4px;
	line-height: 26px;
	text-align: center;
	color: #000;
	background: #f8dcc6;
}

/* dock */
.dock {
	display: flex;
	width: 2089px;
	height: 90px;
	flex: none;
	margin: 2px 0 0 235px;
	padding: 6px 0 0 3px;
	background: #15131f;
	border-top: 2px solid #3a3944;
	border-left: 2px solid #33323c;
	border-right: 2px solid #33323c;
	border-radius: 14px 14px 0 0;
}
.dock-item {
	display: flex;
	flex-direction: column;
	align-items: center;
	width: 72px;
	flex: none;
}
.dock-item svg {
	width: 72px;
	height: 72px;
	overflow: visible;
}
.dock-item i {
	width: 8px;
	height: 8px;
	border-radius: 50%;
}
.dock-item.on i {
	background: #8b8a96;
}
.dock-sep {
	width: 2px;
	height: 62px;
	margin: 6px 15px 0;
	background: #55545e;
	flex: none;
}
.cal-may {
	font: 10px "Inter", sans-serif;
	fill: #fff;
	text-anchor: middle;
}
.cal-day {
	font: 300 28px "Inter", sans-serif;
	fill: #222;
	text-anchor: middle;
}
.maps-3d {
	font: 11px "Inter", sans-serif;
	fill: #6a7680;
	text-anchor: middle;
}
.badge-num {
	font: 14px "Inter", sans-serif;
	fill: #fff;
	text-anchor: middle;
}
.word-w {
	font: 700 22px "Liberation Sans", sans-serif;
	fill: #fff;
	text-anchor: middle;
}
```
